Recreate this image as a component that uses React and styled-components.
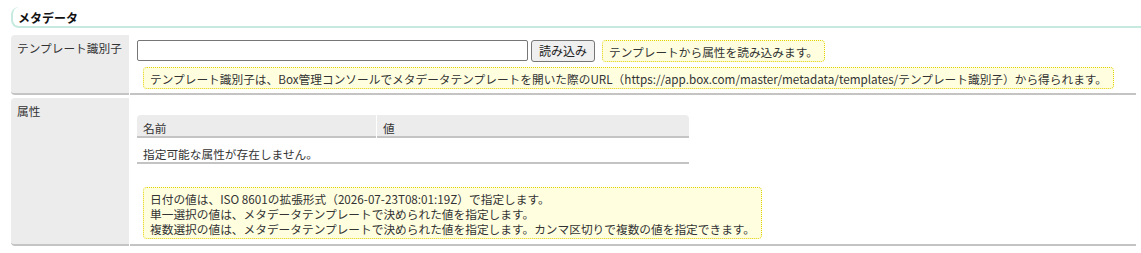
import React from "react";
import styled, { createGlobalStyle } from "styled-components";

const GlobalStyle = createGlobalStyle`
  body {
    margin: 0;
    background: #fff;
    color: #333;
    font-family: "Noto Sans CJK JP", "Noto Sans", sans-serif;
    font-size: 11.7px;
  }
`;

const Page = styled.div`
  padding: 7px 0 0 11px;
`;

const Heading = styled.h2`
  margin: 0;
  padding: 2px 0 0 5px;
  font-size: 12px;
  font-weight: bold;
  line-height: 17px;
  color: #111;
  border-left: 2px solid #c6eadf;
  border-bottom: 2px solid #c6eadf;
  border-radius: 8px 0 0 8px;
`;

const Form = styled.div`
  margin: 7px 5px 0 0;
  display: flex;
  flex-direction: column;
  gap: 3px;
`;

const FormRow = styled.div`
  display: grid;
  grid-template-columns: 118px 1fr;
  column-gap: 1px;
`;

const Label = styled.div`
  background: #ececec;
  border-bottom: 2px solid #c4c4c4;
  border-radius: 4px 0 0 4px;
  padding: 5px 5px 6px 6px;
  line-height: 16px;
  white-space: nowrap;
`;

const Value = styled.div`
  border-bottom: 2px solid #c4c4c4;
  padding: ${(p) => p.$top}px 0 ${(p) => p.$bottom}px 7px;
`;

const InputLine = styled.div`
  display: flex;
  align-items: center;
  gap: 3px;
  height: 23px;
`;

const TextInput = styled.input`
  box-sizing: border-box;
  width: 391px;
  height: 21px;
  padding: 1px 3px;
  border: 1px solid #767676;
  border-radius: 2px;
  font-family: inherit;
  font-size: 12px;
`;

const Button = styled.button`
  box-sizing: border-box;
  height: 22px;
  padding: 0 7px;
  background: #efefef;
  border: 1px solid #767676;
  border-radius: 3px;
  font-family: inherit;
  font-size: 12px;
  color: #222;
`;

const Hint = styled.div`
  width: fit-content;
  margin: ${(p) => p.$margin || "0"};
  padding: 3px 6px 2px;
  background: #ffffe0;
  border: 1px dotted #e2d000;
  border-radius: 4px;
  line-height: 15px;
  color: #333;
  white-space: nowrap;
`;

const AttrTable = styled.div`
  display: grid;
  grid-template-columns: 239px 1fr;
  column-gap: 1px;
  width: 552px;
`;

const HeadCell = styled.div`
  background: #ececec;
  border-bottom: 2px solid #c4c4c4;
  border-radius: ${(p) => (p.$last ? "0 4px 0 0" : "4px 0 0 0")};
  padding: 5px 6px 1px;
  line-height: 15px;
`;

const EmptyCell = styled.div`
  grid-column: 1 / -1;
  border-bottom: 2px solid #c4c4c4;
  padding: 8px 6px 1px;
  line-height: 15px;
`;

export default function App() {
  return (
    <Page>
      <GlobalStyle />
      <Heading>メタデータ</Heading>
      <Form>
        <FormRow>
          <Label>テンプレート識別子</Label>
          <Value $top={4} $bottom={4}>
            <InputLine>
              <TextInput type="text" />
              <Button>読み込み</Button>
              <Hint $margin="0 0 0 4px">テンプレートから属性を読み込みます。</Hint>
            </InputLine>
            <Hint $margin="5px 0 0 6px">
              テンプレート識別子は、Box管理コンソールでメタデータテンプレートを開いた際のURL（https://app.box.com/master/metadata/templates/テンプレート識別子）から得られます。
            </Hint>
          </Value>
        </FormRow>
        <FormRow>
          <Label>属性</Label>
          <Value $top={17} $bottom={5}>
            <AttrTable>
              <HeadCell>名前</HeadCell>
              <HeadCell $last>値</HeadCell>
              <EmptyCell>指定可能な属性が存在しません。</EmptyCell>
            </AttrTable>
            <Hint $margin="23px 0 0 6px">
              日付の値は、ISO 8601の拡張形式（2026-07-23T08:01:19Z）で指定します。
              <br />
              単一選択の値は、メタデータテンプレートで決められた値を指定します。
              <br />
              複数選択の値は、メタデータテンプレートで決められた値を指定します。カンマ区切りで複数の値を指定できます。
            </Hint>
          </Value>
        </FormRow>
      </Form>
    </Page>
  );
}
